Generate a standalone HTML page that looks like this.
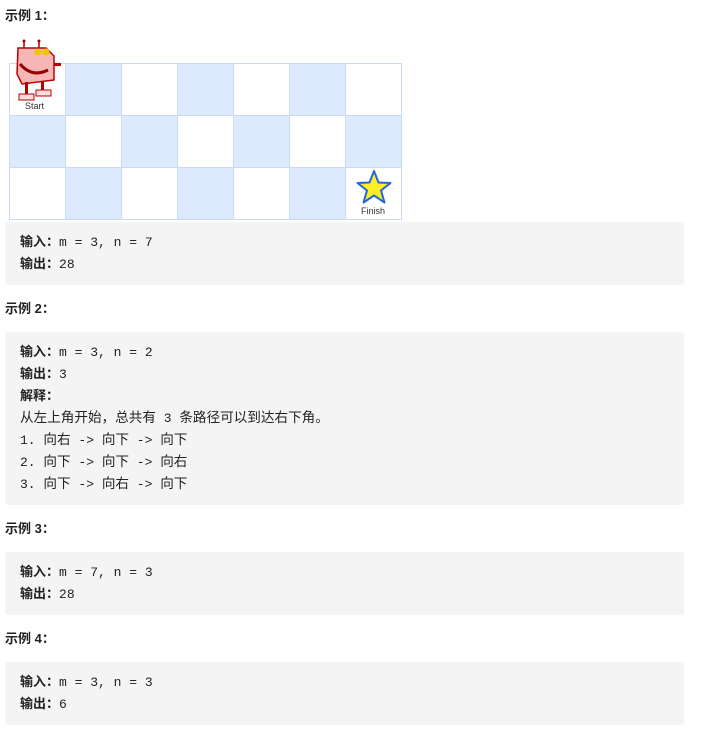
<!DOCTYPE html>
<html><head><meta charset="utf-8"><style>
body{margin:0;background:#fff;font-family:"Liberation Sans","Noto Sans CJK SC",sans-serif;font-size:13px;color:#222;width:703px;height:738px;position:relative;overflow:hidden}
.h{position:absolute;left:5px;font-weight:bold;font-size:13px;line-height:16px}
.box{position:absolute;left:5px;width:679px;background:#f4f4f4;border-radius:3px}
.l{position:absolute;left:15px;line-height:22px;white-space:pre;font-family:"Liberation Mono","Noto Sans CJK SC",monospace;font-size:13px}
.l b{font-family:"Liberation Sans","Noto Sans CJK SC",sans-serif;font-weight:bold}
.c{font-family:"Liberation Sans","Noto Sans CJK SC",sans-serif;font-size:13.6px}
table{position:absolute;left:9px;top:63px;border-collapse:collapse}
td{width:55px;height:51px;border:1px solid #c8dbfb;padding:0}
.b{background:#dde9fd}
</style></head><body>
<div class="h" style="top:8px">示例 1：</div>
<table>
<tr><td></td><td class="b"></td><td></td><td class="b"></td><td></td><td class="b"></td><td></td></tr>
<tr><td class="b"></td><td></td><td class="b"></td><td></td><td class="b"></td><td></td><td class="b"></td></tr>
<tr><td></td><td class="b"></td><td></td><td class="b"></td><td></td><td class="b"></td><td></td></tr>
</table>
<svg style="position:absolute;left:14px;top:38px" width="50" height="66" viewBox="0 0 50 66">
<line x1="10" y1="4" x2="10" y2="12" stroke="#a00" stroke-width="1.5"/><line x1="25" y1="4" x2="25" y2="10" stroke="#a00" stroke-width="1.5"/>
<circle cx="10" cy="3" r="1.5" fill="#a00"/><circle cx="25" cy="3" r="1.5" fill="#a00"/>
<path d="M4 10 L32 10 L40 18 L40 42 L8 46 L3 36 Z" fill="#f6b6b6" stroke="#b00" stroke-width="1.5"/>
<circle cx="24" cy="14" r="3.5" fill="#f2c300"/><circle cx="32" cy="14" r="3.5" fill="#f2c300"/>
<path d="M6 26 Q18 40 34 32" fill="none" stroke="#900" stroke-width="3"/>
<rect x="40" y="25" width="7" height="3" fill="#b00"/>
<rect x="11" y="44" width="3" height="14" fill="#b00"/><rect x="27" y="43" width="3" height="12" fill="#b00"/>
<rect x="5" y="56" width="15" height="6" fill="#fdd" stroke="#b00"/><rect x="22" y="52" width="15" height="6" fill="#fdd" stroke="#b00"/>
</svg>
<div style="position:absolute;left:25px;top:101px;font-size:9px;color:#333">Start</div>
<svg style="position:absolute;left:356px;top:170px" width="36" height="34" viewBox="0 0 36 34"><polygon points="18,1 22.5,12.5 34.5,13 25,20.5 28.5,32.5 18,25.5 7.5,32.5 11,20.5 1.5,13 13.5,12.5" fill="#ffee22" stroke="#2266dd" stroke-width="2" stroke-linejoin="round"/></svg>
<div style="position:absolute;left:361px;top:206px;font-size:9px;color:#333">Finish</div>

<div class="box" style="top:222px;height:63px">
<div class="l" style="top:9px"><b>输入：</b>m = 3, n = 7</div>
<div class="l" style="top:31px"><b>输出：</b>28</div>
</div>

<div class="h" style="top:301px">示例 2：</div>
<div class="box" style="top:332px;height:173px">
<div class="l" style="top:9px"><b>输入：</b>m = 3, n = 2</div>
<div class="l" style="top:31px"><b>输出：</b>3</div>
<div class="l" style="top:53px"><b>解释：</b></div>
<div class="l" style="top:75px"><span class="c">从左上角开始，总共有</span> 3 <span class="c">条路径可以到达右下角。</span></div>
<div class="l" style="top:97px">1. <span class="c">向右</span> -&gt; <span class="c">向下</span> -&gt; <span class="c">向下</span></div>
<div class="l" style="top:119px">2. <span class="c">向下</span> -&gt; <span class="c">向下</span> -&gt; <span class="c">向右</span></div>
<div class="l" style="top:141px">3. <span class="c">向下</span> -&gt; <span class="c">向右</span> -&gt; <span class="c">向下</span></div>
</div>

<div class="h" style="top:521px">示例 3：</div>
<div class="box" style="top:552px;height:63px">
<div class="l" style="top:9px"><b>输入：</b>m = 7, n = 3</div>
<div class="l" style="top:31px"><b>输出：</b>28</div>
</div>

<div class="h" style="top:631px">示例 4：</div>
<div class="box" style="top:662px;height:63px">
<div class="l" style="top:9px"><b>输入：</b>m = 3, n = 3</div>
<div class="l" style="top:31px"><b>输出：</b>6</div>
</div>
</body></html>
